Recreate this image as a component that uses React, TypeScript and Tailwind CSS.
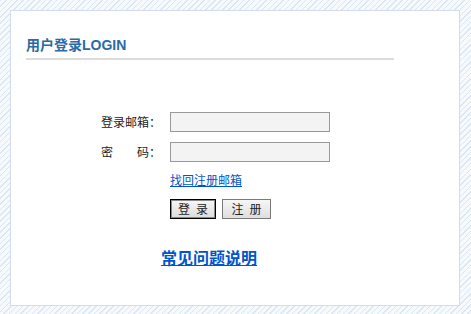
import React from "react";

export default function App() {
  const cjk = { fontFamily: '"SimSun", "Noto Sans CJK SC", sans-serif' };

  return (
    <div className="w-[471px] h-[314px] overflow-hidden bg-[repeating-linear-gradient(135deg,#dbe6f2_0px,#dbe6f2_1px,#f7fafd_1px,#f7fafd_4px)] p-[10px] pr-[11px] pb-[8px]">
      <div className="h-full bg-white border border-[#d3dce8] pl-[15px]">
        {/* Title */}
        <div className="pt-[24px] w-[368px] border-b-2 border-[#dcdcdc] pb-[3px]">
          <h1
            className="text-[14px] leading-[20px] font-bold text-[#2a6aa5]"
            style={{ fontFamily: '"Liberation Sans", "Noto Sans CJK SC", sans-serif' }}
          >
            用户登录LOGIN
          </h1>
        </div>

        {/* Form */}
        <form className="ml-[75px] mt-[52px] text-[12px] text-[#222]" style={cjk}>
          <div className="grid grid-cols-[60px_160px] gap-x-[9px] gap-y-[10px] items-center">
            <label className="leading-[20px]">登录邮箱：</label>
            <input
              type="text"
              className="h-[20px] w-[160px] bg-[#f3f3f3] border border-[#999] outline-none"
            />
            <label className="leading-[20px]">密　　码：</label>
            <input
              type="password"
              className="h-[20px] w-[160px] bg-[#f3f3f3] border border-[#999] outline-none"
            />
            <div />
            <a href="#" className="leading-[16px] text-[#0055cc] underline">
              找回注册邮箱
            </a>
            <div />
            <div className="flex gap-[6px] mt-[1px]">
              <button
                type="button"
                className="w-[46px] h-[20px] border border-black p-0 bg-white"
              >
                <span className="flex h-full items-center justify-center gap-[6px] border border-[#8a8a8a] bg-[linear-gradient(#f6f6f6,#dedede)] leading-none">
                  <span>登</span>
                  <span>录</span>
                </span>
              </button>
              <button
                type="button"
                className="flex w-[49px] h-[20px] items-center justify-center gap-[6px] border border-[#7a7a7a] bg-[linear-gradient(#f6f6f6,#dedede)] leading-none"
              >
                <span>注</span>
                <span>册</span>
              </button>
            </div>
          </div>
        </form>

        {/* FAQ */}
        <div className="ml-[135px] mt-[27px]">
          <a
            href="#"
            className="text-[16px] leading-[20px] font-bold text-[#0055cc] underline"
            style={cjk}
          >
            常见问题说明
          </a>
        </div>
      </div>
    </div>
  );
}
